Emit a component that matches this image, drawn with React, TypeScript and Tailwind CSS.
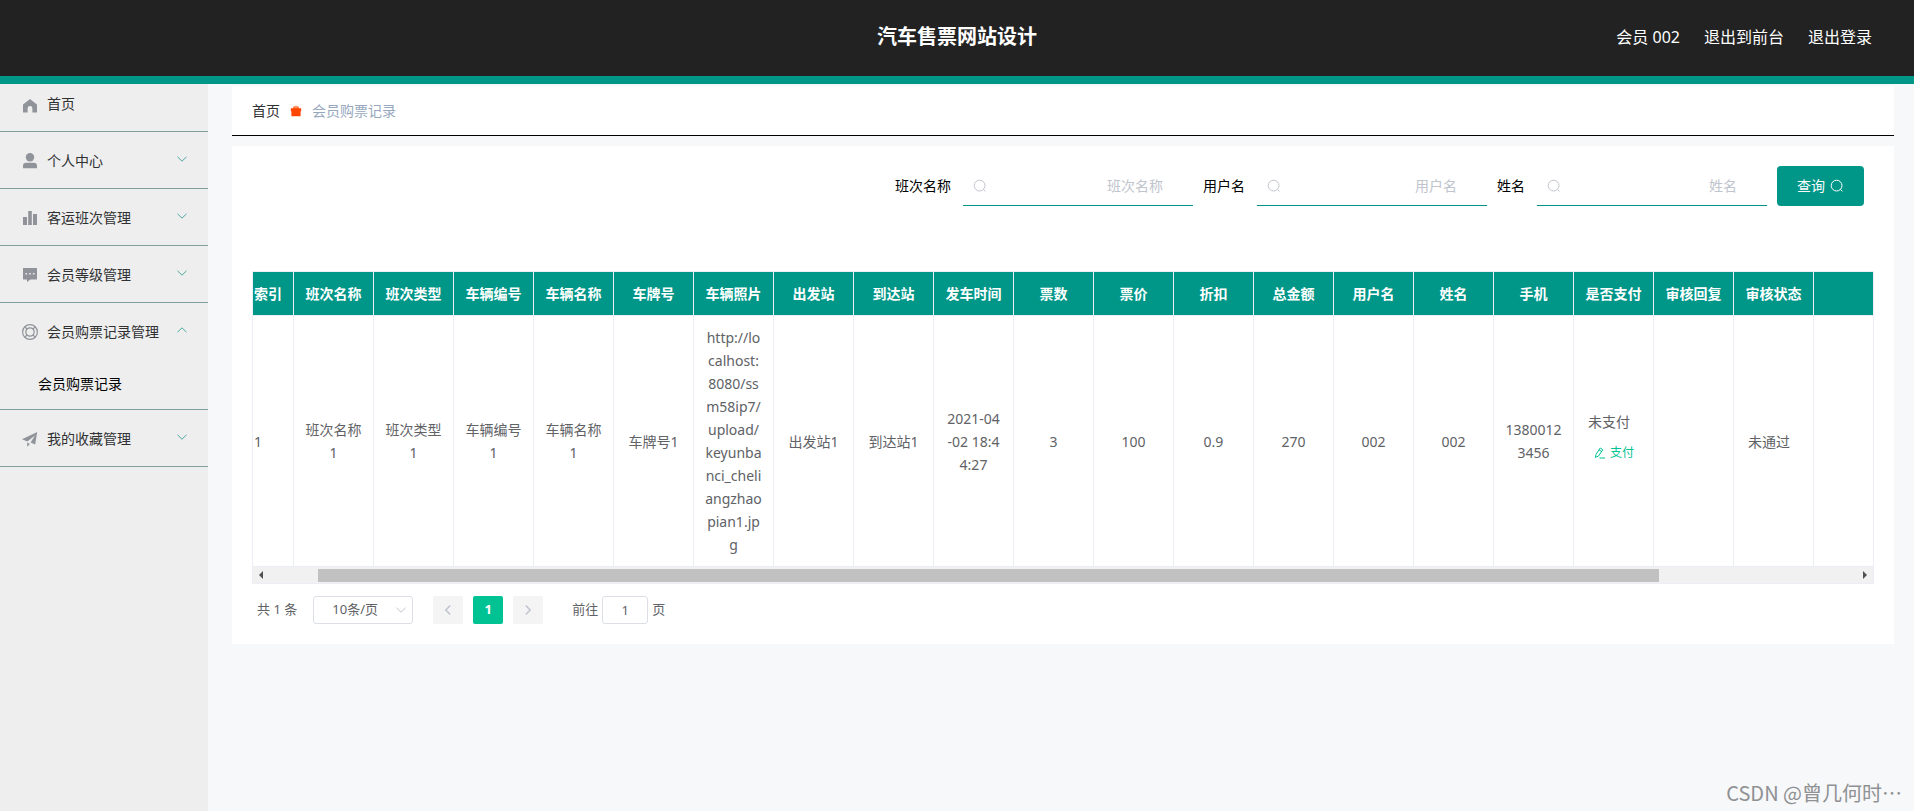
import React, { useState } from 'react';

type IconName = 'home' | 'user' | 'data' | 'comment' | 'help' | 'promotion';

interface MenuItem {
  name: string;
  icon: IconName;
  children?: string[];
}

const MENUS: MenuItem[] = [
  { name: '个人中心', icon: 'user', children: ['个人信息'] },
  { name: '客运班次管理', icon: 'data', children: ['客运班次'] },
  { name: '会员等级管理', icon: 'comment', children: ['会员等级'] },
  { name: '会员购票记录管理', icon: 'help', children: ['会员购票记录'] },
  { name: '我的收藏管理', icon: 'promotion', children: ['我的收藏'] },
];

const COLUMNS = [
  { label: '班次名称', key: 'banciName' },
  { label: '班次类型', key: 'banciType' },
  { label: '车辆编号', key: 'cheliangNo' },
  { label: '车辆名称', key: 'cheliangName' },
  { label: '车牌号', key: 'plate' },
  { label: '车辆照片', key: 'photo' },
  { label: '出发站', key: 'from' },
  { label: '到达站', key: 'to' },
  { label: '发车时间', key: 'time' },
  { label: '票数', key: 'count' },
  { label: '票价', key: 'price' },
  { label: '折扣', key: 'discount' },
  { label: '总金额', key: 'total' },
  { label: '用户名', key: 'username' },
  { label: '姓名', key: 'realName' },
  { label: '手机', key: 'phone' },
];

const ROWS: Record<string, string>[] = [
  {
    banciName: '班次名称1',
    banciType: '班次类型1',
    cheliangNo: '车辆编号1',
    cheliangName: '车辆名称1',
    plate: '车牌号1',
    photo: 'http://lo\ncalhost:\n8080/ss\nm58ip7/\nupload/\nkeyunba\nnci_cheli\nangzhao\npian1.jp\ng',
    from: '出发站1',
    to: '到达站1',
    time: '2021-04\n-02 18:4\n4:27',
    count: '3',
    price: '100',
    discount: '0.9',
    total: '270',
    username: '002',
    realName: '002',
    phone: '13800123456',
    paid: '未支付',
    reply: '',
    status: '未通过',
  },
];

const SEARCH_FIELDS = [
  { id: 'banci', label: '班次名称' },
  { id: 'username', label: '用户名' },
  { id: 'realname', label: '姓名' },
];

const MenuIcon: React.FC<{ name: IconName }> = ({ name }) => (
  <svg viewBox="0 0 18 18" className="h-[18px] w-[18px] shrink-0 text-[#909399]" fill="currentColor">
    {name === 'home' && <path d="M9 2 2 7.4V15.5h4.6v-4a2.4 2.4 0 0 1 4.8 0v4H16V7.4z" />}
    {name === 'user' && (
      <>
        <circle cx="9" cy="5.2" r="4.2" />
        <path d="M2 16.2V14a3.2 3.2 0 0 1 3.2-3.2h7.6A3.2 3.2 0 0 1 16 14v2.2z" />
      </>
    )}
    {name === 'data' && <path d="M2 8h4v8H2zM7.2 2h3.6v14H7.2zM12 5h4v11h-4z" />}
    {name === 'comment' && (
      <path
        fillRule="evenodd"
        d="M2 2h14v11.5H9.5L6 16v-2.5H2zM4.5 7v1.6h1.6V7zM8.2 7v1.6h1.6V7zM11.9 7v1.6h1.6V7z"
      />
    )}
    {name === 'help' && (
      <g fill="none" stroke="currentColor" strokeWidth="1.2">
        <circle cx="9" cy="9" r="7.4" />
        <circle cx="9" cy="9" r="4.2" />
        <path d="M3.8 3.8 6 6M14.2 3.8 12 6M3.8 14.2 6 12M14.2 14.2 12 12" />
      </g>
    )}
    {name === 'promotion' && <path d="M1 9.2 16.2 2 14.2 14.6l-4.6-2L14 5.4l-7.6 6.2zM6.2 12.6l2.8 1.3-2.8 2.8z" />}
  </svg>
);

const Chevron: React.FC<{ className?: string }> = ({ className }) => (
  <svg viewBox="0 0 12 12" className={className} fill="none" stroke="currentColor">
    <path d="M1.5 3.8 6 8.2l4.5-4.4" />
  </svg>
);

const SearchIcon: React.FC<{ className?: string }> = ({ className }) => (
  <svg viewBox="0 0 14 14" className={className} fill="none" stroke="currentColor">
    <circle cx="6.6" cy="6.6" r="5.4" />
    <path d="m10.4 10.4 2 2" />
  </svg>
);

const Sidebar: React.FC = () => {
  const [opened, setOpened] = useState('会员购票记录管理');

  return (
    <aside className="w-52 shrink-0 bg-[#eeeeee] text-sm text-[#303133]">
      <a href="#" className="flex h-12 items-start gap-2 border-b border-[#82a09b] pt-2 pl-[21px] leading-6">
        <span className="flex h-7 items-center"><MenuIcon name="home" /></span>
        首页
      </a>
      {MENUS.map((menu) => (
        <div key={menu.name} className="border-b border-[#82a09b]">
          <button
            type="button"
            onClick={() => setOpened(opened === menu.name ? '' : menu.name)}
            className="flex h-14 w-full items-center gap-2 pt-0.5 pr-5 pl-[21px]"
          >
            <MenuIcon name={menu.icon} />
            <span>{menu.name}</span>
            <Chevron
              className={
                opened === menu.name
                  ? 'mb-1 ml-auto h-3 w-3 rotate-180 text-[#4da8a0]'
                  : 'mb-1 ml-auto h-3 w-3 text-[#4da8a0]'
              }
            />
          </button>
          {opened === menu.name &&
            menu.children?.map((child) => (
              <a key={child} href="#" className="flex h-[50px] items-center pl-[38px] text-black">
                {child}
              </a>
            ))}
        </div>
      ))}
    </aside>
  );
};

const SearchForm: React.FC = () => (
  <form className="flex justify-end gap-2.5 pr-2.5 text-sm" onSubmit={(e) => e.preventDefault()}>
    {SEARCH_FIELDS.map((field) => (
      <div key={field.id} className="flex items-center gap-3">
        <label htmlFor={field.id} className="text-black">{field.label}</label>
        <div className="relative">
          <SearchIcon className="absolute top-[13px] left-2.5 h-3.5 w-3.5 text-[#c0c4cc]" />
          <input
            id={field.id}
            placeholder={field.label}
            className="block h-10 w-[230px] border-b border-[#009688] px-[30px] text-right outline-none placeholder:text-[#c0c4cc]"
          />
        </div>
      </div>
    ))}
    <button type="submit" className="flex h-10 items-center gap-[5px] rounded bg-[#009688] px-5 text-white">
      查询
      <SearchIcon className="h-3.5 w-3.5" />
    </button>
  </form>
);

const RecordTable: React.FC = () => (
  <div className="border border-[#ebeef5]">
    <table className="w-full table-fixed border-separate border-spacing-0 text-sm leading-[23px] text-[#606266]">
      <colgroup>
        <col className="w-[41px]" />
        {COLUMNS.map((col) => (
          <col key={col.key} className="w-20" />
        ))}
        <col className="w-20" />
        <col className="w-20" />
        <col className="w-20" />
        <col />
      </colgroup>
      <thead>
        <tr className="h-11 bg-[#009688] text-white">
          <th className="border-r border-b border-[#ebeef5] pl-px text-left">索引</th>
          {COLUMNS.map((col) => (
            <th key={col.key} className="border-r border-b border-[#ebeef5]">{col.label}</th>
          ))}
          <th className="border-r border-b border-[#ebeef5]">是否支付</th>
          <th className="border-r border-b border-[#ebeef5]">审核回复</th>
          <th className="border-r border-b border-[#ebeef5]">审核状态</th>
          <th className="border-b border-[#ebeef5]" />
        </tr>
      </thead>
      <tbody>
        {ROWS.map((row, index) => (
          <tr key={index} className="text-center">
            <td className="border-r border-b border-[#ebeef5] pl-px text-left">{index + 1}</td>
            {COLUMNS.map((col) => (
              <td key={col.key} className="border-r border-b border-[#ebeef5] px-[9px] py-2.5 break-all whitespace-pre-line">
                {row[col.key]}
              </td>
            ))}
            <td className="border-r border-b border-[#ebeef5] pl-3.5 text-left">
              <div>{row.paid}</div>
              <button type="button" className="flex h-10 items-center gap-1 pl-1.5 text-xs text-[#00c292]">
                <svg viewBox="0 0 12 12" className="h-3 w-3" fill="none" stroke="currentColor">
                  <path d="M1.4 10.4 2 7.4 6.2 1l2.6 1.7-4.3 6.4zM5 2.8l2.6 1.7M5.5 11h5.5" />
                </svg>
                支付
              </button>
            </td>
            <td className="border-r border-b border-[#ebeef5]">{row.reply}</td>
            <td className="border-r border-b border-[#ebeef5] pl-3.5 text-left">{row.status}</td>
            <td className="border-b border-[#ebeef5]" />
          </tr>
        ))}
      </tbody>
    </table>
    {/* horizontal scroll bar */}
    <div className="flex h-4 items-center bg-[#f1f1f1] px-1.5 text-[#505050]">
      <svg viewBox="0 0 4 8" className="h-2 w-1" fill="currentColor"><path d="M4 0v8L0 4z" /></svg>
      <div className="mx-[55px] h-[13px] flex-1">
        <div className="h-full w-[90%] bg-[#c1c1c1]" />
      </div>
      <svg viewBox="0 0 4 8" className="h-2 w-1" fill="currentColor"><path d="M0 0v8l4-4z" /></svg>
    </div>
  </div>
);

const Pagination: React.FC = () => (
  <div className="mt-3 flex h-7 items-center px-[5px] text-[13px] text-[#606266]">
    <span>共 1 条</span>
    <div className="relative ml-4">
      <select
        aria-label="每页条数"
        className="block h-7 w-[100px] appearance-none rounded-[3px] border border-[#dcdfe6] bg-white pr-4 text-center text-[13px]"
      >
        <option>10条/页</option>
      </select>
      <Chevron className="pointer-events-none absolute top-2 right-1.5 h-3 w-3 text-[#c0c4cc]" />
    </div>
    <div className="ml-5 flex gap-2.5">
      <button type="button" aria-label="上一页" disabled className="flex h-7 w-[30px] items-center justify-center rounded-xs bg-[#f4f4f5] text-[#c0c4cc]">
        <Chevron className="h-3 w-3 rotate-90 stroke-[1.5]" />
      </button>
      <button type="button" className="h-7 w-[30px] rounded-xs bg-[#00c292] font-bold text-white">1</button>
      <button type="button" aria-label="下一页" disabled className="flex h-7 w-[30px] items-center justify-center rounded-xs bg-[#f4f4f5] text-[#c0c4cc]">
        <Chevron className="h-3 w-3 -rotate-90 stroke-[1.5]" />
      </button>
    </div>
    <label className="ml-[29px] flex items-center gap-1">
      前往
      <input defaultValue="1" className="h-7 w-[46px] rounded-[3px] border border-[#dcdfe6] text-center outline-none" />
      页
    </label>
  </div>
);

const App: React.FC = () => {
  return (
    <div className="flex min-h-screen flex-col bg-[#f7f8fa] font-['Noto_Sans','Noto_Sans_CJK_SC',sans-serif]">
      <header className="grid h-[84px] grid-cols-[1fr_auto_1fr] items-center border-b-8 border-[#009688] bg-[#222222] px-[42px] pb-0.5 text-white">
        <h1 className="col-start-2 text-xl font-bold">汽车售票网站设计</h1>
        <nav className="flex justify-end gap-6 text-base">
          <span>会员 002</span>
          <a href="#">退出到前台</a>
          <a href="#">退出登录</a>
        </nav>
      </header>

      <div className="flex flex-1">
        <Sidebar />
        <main className="min-w-0 flex-1 pt-0.5 pr-5 pl-6">
          <nav className="flex h-[50px] items-center gap-2.5 border-b border-black bg-white px-5 text-sm">
            <a href="#" className="text-[#303133]">首页</a>
            <svg viewBox="0 0 12 12" className="h-3 w-3" fill="#ff4500">
              <path d="M.8 3.2h2.6V1.6h1.4v1.6h.6V.8h1.2v2.4h.6V1.6h1.4v1.6h2.6v3H.8zM1.4 5.8h9.2v5.4H1.4z" />
            </svg>
            <span className="text-[#97a8be]">会员购票记录</span>
          </nav>

          <section className="mt-2.5 bg-white p-5">
            <SearchForm />
            <div className="mt-[65px]">
              <RecordTable />
            </div>
            <Pagination />
          </section>
        </main>
      </div>

      <div className="absolute right-3 bottom-1 font-['Noto_Sans_CJK_SC',sans-serif] text-xl text-[#8f9193]">
        CSDN @曾几何时⋯
      </div>
    </div>
  );
};

export default App;
